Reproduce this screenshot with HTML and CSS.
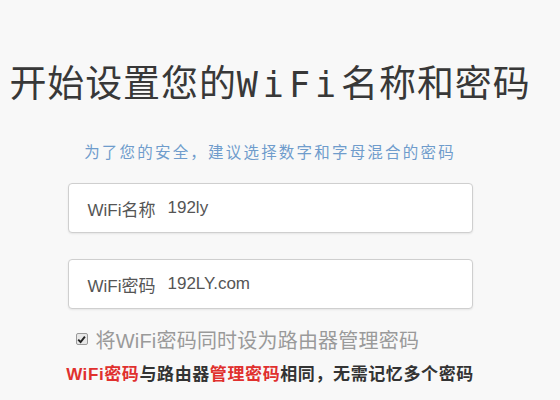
FILE: index.html
```html
<!DOCTYPE html>
<html lang="zh-CN">
<head>
    <meta charset="UTF-8">
    <title>设置WiFi</title>
    <link rel="stylesheet" href="styles.css">
</head>
<body>
    <div class="page">
        <h1 class="title">开始设置您的<span class="mono">WiFi</span>名称和密码</h1>
        <p class="tip">为了您的安全，建议选择数字和字母混合的密码</p>

        <div class="field">
            <span class="field-label">WiFi名称</span>
            <span class="field-value">192ly</span>
        </div>
        <div class="field">
            <span class="field-label">WiFi密码</span>
            <span class="field-value">192LY.com</span>
        </div>

        <div class="check-row">
            <span class="check-box">
                <svg width="9" height="9" viewBox="0 0 9 9">
                    <path d="M1.2 4.6 L3.6 7 L7.9 1.6" fill="none" stroke="#222" stroke-width="1.9"/>
                </svg>
            </span>
            <span class="check-text">将WiFi密码同时设为路由器管理密码</span>
        </div>

        <p class="note"><span class="red">WiFi密码</span>与路由器<span class="red">管理密码</span>相同，无需记忆多个密码</p>
    </div>
</body>
</html>
```

FILE: styles.css
```css
body {
    margin: 0;
    background-color: #f8f8f8;
    font-family: "Liberation Sans", "Noto Sans CJK SC", sans-serif;
}
.page {
    width: 540px;
    padding-top: 59px;
}
.title {
    margin: 0;
    font-size: 37px;
    line-height: 44px;
    font-weight: normal;
    letter-spacing: 0.9px;
    color: #383838;
    text-align: center;
    font-family: "Noto Sans CJK SC", sans-serif;
}
.title .mono {
    font-family: "DejaVu Sans Mono", monospace;
    font-size: 35px;
    letter-spacing: 5px;
}
.tip {
    margin: 36px 0 0;
    font-size: 15.5px;
    line-height: 20px;
    letter-spacing: 2.2px;
    color: #6f9ccc;
    text-align: center;
}
.field {
    box-sizing: border-box;
    width: 405px;
    height: 50px;
    margin: 20px auto 0;
    padding-left: 19px;
    display: flex;
    align-items: center;
    background-color: #fff;
    border: 1px solid #cfcfcf;
    border-radius: 4px;
    box-shadow: 0 1px 2px rgba(0, 0, 0, 0.08);
    font-size: 17px;
    color: #555;
}
.field + .field {
    margin-top: 26px;
}
.field-label {
    margin-right: 12px;
}
.check-row {
    width: 405px;
    margin: 18px auto 0;
    padding-left: 8px;
    box-sizing: border-box;
    display: flex;
    align-items: center;
    height: 24px;
}
.check-box {
    box-sizing: border-box;
    width: 12px;
    height: 12px;
    border: 1px solid #9a9a9a;
    border-radius: 2px;
    background-color: #e8e8e8;
    display: flex;
    align-items: center;
    justify-content: center;
    margin-right: 8px;
}
.check-text {
    font-size: 20px;
    letter-spacing: 0.2px;
    color: #9a9a9a;
}
.note {
    margin: 13px 0 0;
    font-size: 17px;
    line-height: 22px;
    font-weight: bold;
    letter-spacing: 0.6px;
    color: #333;
    text-align: center;
}
.red {
    color: #e0302e;
}
```
